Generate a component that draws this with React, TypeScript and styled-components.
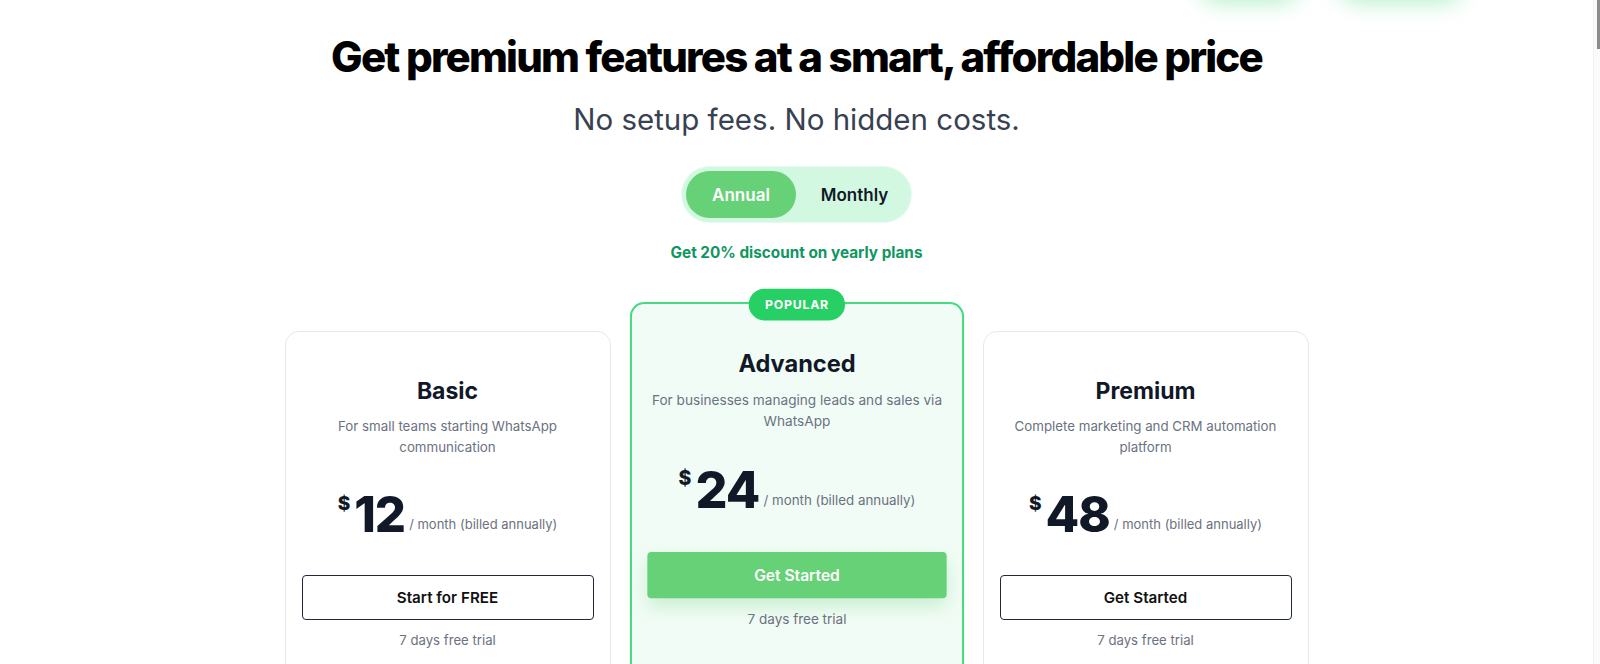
import React, { useState } from "react";
import styled, { createGlobalStyle, css } from "styled-components";

const GlobalStyle = createGlobalStyle`
  body {
    margin: 0;
    padding-right: 7px;
    background: #ffffff;
    font-family: Inter, "Noto Sans", sans-serif;
    color: #111827;
  }
  * {
    box-sizing: border-box;
  }
`;

const Page = styled.div`
  min-height: 9000px;
  display: flex;
  flex-direction: column;
`;

// thin page scrollbar drawn at the right edge
const ScrollRail = styled.div`
  position: fixed;
  top: 0;
  right: 0;
  width: 7px;
  height: 100vh;
  background: #fafafa;
  border-left: 1px solid #f2f2f2;
`;

const ScrollThumb = styled.div`
  margin-left: auto;
  width: 3px;
  height: 49px;
  background: #8c8c8c;
`;

// nav sits just above the fold, only its glow peeks in
const Nav = styled.nav`
  height: 48px;
  margin-top: -48px;
  display: flex;
  align-items: center;
  justify-content: flex-end;
  gap: 40px;
  padding-right: 130px;
`;

const NavPill = styled.span<{ $width: number }>`
  height: 40px;
  width: ${(p) => p.$width}px;
  border-radius: 999px;
  background: #ffffff;
  box-shadow: 0 6px 22px rgba(37, 211, 102, 0.36);
`;

const Main = styled.main`
  display: flex;
  flex-direction: column;
  align-items: center;
  padding-top: 33px;
`;

const Title = styled.h1`
  margin: 0;
  font-size: 42px;
  line-height: 48px;
  font-weight: 800;
  letter-spacing: -0.043em;
  color: #000000;
`;

const Subtitle = styled.p`
  margin: 20px 0 0;
  font-size: 29.5px;
  line-height: 36px;
  font-weight: 400;
  color: #374151;
`;

const Toggle = styled.div`
  margin-top: 30px;
  display: flex;
  gap: 6px;
  padding: 4px;
  border-radius: 999px;
  background: #d3f8e2;
  box-shadow: 0 0 0 1px #e4fbee;
`;

const ToggleOption = styled.button<{ $active: boolean }>`
  height: 47px;
  width: ${(p) => (p.$active ? 110 : 105)}px;
  border: none;
  border-radius: 999px;
  font-family: inherit;
  font-size: 17px;
  font-weight: 600;
  cursor: pointer;
  background: transparent;
  color: #111827;

  ${(p) =>
    p.$active &&
    css`
      background: #66d176;
      color: #ffffff;
    `}
`;

const Discount = styled.p`
  margin: 21px 0 0;
  font-size: 15.3px;
  line-height: 20px;
  font-weight: 700;
  color: #109660;
`;

const Cards = styled.div`
  margin-top: 39px;
  display: grid;
  grid-template-columns: repeat(3, 326px);
  gap: 23px;
  align-items: start;
`;

const Card = styled.div<{ $featured?: boolean }>`
  position: relative;
  min-height: 620px;
  padding: 43px 16px 40px;
  border: 1px solid #e7e8eb;
  border-radius: 14px;
  background: #ffffff;
  display: flex;
  flex-direction: column;
  align-items: center;
  text-align: center;
  margin-top: 29px;

  ${(p) =>
    p.$featured &&
    css`
      margin-top: 0;
      border: 2px solid #45db80;
      padding-top: 42px;
      padding-left: 15px;
      padding-right: 15px;
      background: #f2fcf6;
      transform: scale(1.025);
      transform-origin: top center;
    `}
`;

const Badge = styled.span`
  position: absolute;
  top: -15px;
  left: 50%;
  transform: translateX(-50%);
  height: 31px;
  padding: 0 16px;
  border-radius: 999px;
  background: #27d065;
  color: #ffffff;
  font-size: 12px;
  font-weight: 700;
  letter-spacing: 0.06em;
  display: flex;
  align-items: center;
`;

const PlanName = styled.h3`
  margin: 0;
  font-size: 23px;
  line-height: 32px;
  font-weight: 700;
  color: #111827;
`;

const PlanDesc = styled.p`
  margin: 9px 0 0;
  padding: 0 4px;
  font-size: 13.3px;
  line-height: 20.5px;
  color: #6b7280;
`;

const PriceRow = styled.div`
  margin-top: 34px;
  display: flex;
  align-items: baseline;
  justify-content: center;
`;

const Currency = styled.span`
  align-self: flex-start;
  font-size: 19px;
  line-height: 22px;
  font-weight: 800;
  margin-top: 2px;
  margin-right: 4px;
  color: #111827;
`;

const Amount = styled.span`
  font-size: 49px;
  line-height: 48px;
  font-weight: 800;
  letter-spacing: -0.02em;
  color: #111827;
`;

const Period = styled.span`
  margin-left: 4px;
  font-size: 13px;
  color: #6b7280;
  position: relative;
  top: -3px;
`;

const CtaButton = styled.button<{ $primary?: boolean }>`
  margin-top: 36px;
  width: 100%;
  height: 45px;
  border-radius: 4px;
  font-family: inherit;
  font-size: 15.2px;
  font-weight: 600;
  cursor: pointer;
  border: 1px solid #1f2937;
  background: #ffffff;
  color: #111111;

  ${(p) =>
    p.$primary &&
    css`
      border: none;
      background: #66d176;
      color: #ffffff;
      box-shadow: 0 8px 18px rgba(102, 209, 118, 0.3);
    `}
`;

const Trial = styled.p`
  margin: 10px 0 0;
  font-size: 13.2px;
  line-height: 20px;
  color: #6b7280;
`;

const plans = [
  {
    name: "Basic",
    desc: "For small teams starting WhatsApp communication",
    price: 12,
    cta: "Start for FREE",
    featured: false
  },
  {
    name: "Advanced",
    desc: "For businesses managing leads and sales via WhatsApp",
    price: 24,
    cta: "Get Started",
    featured: true
  },
  {
    name: "Premium",
    desc: "Complete marketing and CRM automation platform",
    price: 48,
    cta: "Get Started",
    featured: false
  }
];

const App = () => {
  const [annual, setAnnual] = useState(true);

  return (
    <Page>
      <GlobalStyle />
      <ScrollRail>
        <ScrollThumb />
      </ScrollRail>
      <Nav>
        <NavPill $width={100} />
        <NavPill $width={124} />
      </Nav>
      <Main>
        <Title>Get premium features at a smart, affordable price</Title>
        <Subtitle>No setup fees. No hidden costs.</Subtitle>
        <Toggle>
          <ToggleOption $active={annual} onClick={() => setAnnual(true)}>
            Annual
          </ToggleOption>
          <ToggleOption $active={!annual} onClick={() => setAnnual(false)}>
            Monthly
          </ToggleOption>
        </Toggle>
        <Discount>Get 20% discount on yearly plans</Discount>
        <Cards>
          {plans.map((plan) => (
            <Card key={plan.name} $featured={plan.featured}>
              {plan.featured && <Badge>POPULAR</Badge>}
              <PlanName>{plan.name}</PlanName>
              <PlanDesc>{plan.desc}</PlanDesc>
              <PriceRow>
                <Currency>$</Currency>
                <Amount>{plan.price}</Amount>
                <Period>/ month (billed annually)</Period>
              </PriceRow>
              <CtaButton $primary={plan.featured}>{plan.cta}</CtaButton>
              <Trial>7 days free trial</Trial>
            </Card>
          ))}
        </Cards>
      </Main>
    </Page>
  );
};

export default App;
